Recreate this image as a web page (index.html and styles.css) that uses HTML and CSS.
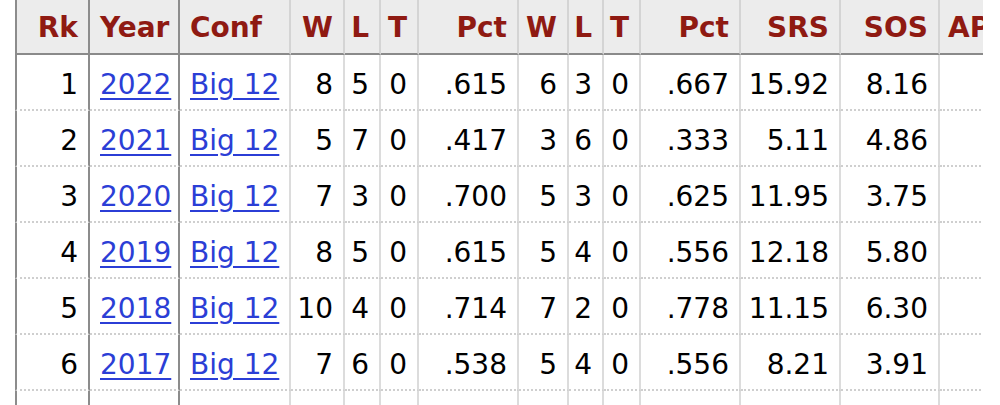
FILE: index.html
```html
<!DOCTYPE html>
<html>
<head>
<meta charset="utf-8">
<link rel="stylesheet" href="styles.css">
</head>
<body>
<div class="wrap">
<table class="stats">
<colgroup>
<col class="c-rk"><col class="c-year"><col class="c-conf"><col class="c-w1"><col class="c-l1"><col class="c-t1"><col class="c-pct"><col class="c-w2"><col class="c-l2"><col class="c-t2"><col class="c-pct"><col class="c-srs"><col class="c-sos"><col class="c-ap">
</colgroup>
<thead>
<tr>
<th class="strong first">Rk</th><th class="strong left">Year</th><th class="left">Conf</th><th>W</th><th>L</th><th>T</th><th>Pct</th><th>W</th><th>L</th><th>T</th><th>Pct</th><th>SRS</th><th>SOS</th><th class="left ap">AP Pre</th>
</tr>
</thead>
<tbody>
<tr><td class="strong first">1</td><td class="strong left"><a href="#">2022</a></td><td class="left"><a href="#">Big 12</a></td><td>8</td><td>5</td><td>0</td><td>.615</td><td>6</td><td>3</td><td>0</td><td>.667</td><td>15.92</td><td>8.16</td><td></td></tr>
<tr><td class="strong first">2</td><td class="strong left"><a href="#">2021</a></td><td class="left"><a href="#">Big 12</a></td><td>5</td><td>7</td><td>0</td><td>.417</td><td>3</td><td>6</td><td>0</td><td>.333</td><td>5.11</td><td>4.86</td><td></td></tr>
<tr><td class="strong first">3</td><td class="strong left"><a href="#">2020</a></td><td class="left"><a href="#">Big 12</a></td><td>7</td><td>3</td><td>0</td><td>.700</td><td>5</td><td>3</td><td>0</td><td>.625</td><td>11.95</td><td>3.75</td><td></td></tr>
<tr><td class="strong first">4</td><td class="strong left"><a href="#">2019</a></td><td class="left"><a href="#">Big 12</a></td><td>8</td><td>5</td><td>0</td><td>.615</td><td>5</td><td>4</td><td>0</td><td>.556</td><td>12.18</td><td>5.80</td><td></td></tr>
<tr><td class="strong first">5</td><td class="strong left"><a href="#">2018</a></td><td class="left"><a href="#">Big 12</a></td><td>10</td><td>4</td><td>0</td><td>.714</td><td>7</td><td>2</td><td>0</td><td>.778</td><td>11.15</td><td>6.30</td><td></td></tr>
<tr><td class="strong first">6</td><td class="strong left"><a href="#">2017</a></td><td class="left"><a href="#">Big 12</a></td><td>7</td><td>6</td><td>0</td><td>.538</td><td>5</td><td>4</td><td>0</td><td>.556</td><td>8.21</td><td>3.91</td><td></td></tr>
<tr><td class="strong first"></td><td class="strong left"></td><td class="left"></td><td></td><td></td><td></td><td></td><td></td><td></td><td></td><td></td><td></td><td></td><td></td></tr>
</tbody>
</table>
</div>
</body>
</html>
```
FILE: styles.css
```css
html, body {
  margin: 0;
  padding: 0;
  background: #fff;
}
.wrap {
  width: 968px;
  padding-left: 15px;
  height: 405px;
  overflow: hidden;
}
.stats {
  table-layout: fixed;
  width: 1005px;
  border-collapse: separate;
  border-spacing: 0;
  font-family: "DejaVu Sans", Verdana, sans-serif;
  font-size: 28px;
  color: #000;
}
.c-rk { width: 75px; }
.c-year { width: 90px; }
.c-conf { width: 111px; }
.c-w1 { width: 54px; }
.c-l1 { width: 36px; }
.c-t1 { width: 38px; }
.c-pct { width: 100px; }
.c-w2 { width: 50px; }
.c-l2 { width: 35px; }
.c-t2 { width: 37px; }
.c-srs { width: 100px; }
.c-sos { width: 99px; }
.c-ap { width: 80px; }

.stats th,
.stats td {
  padding: 0 10px 0 0;
  text-align: right;
  white-space: nowrap;
  overflow: hidden;
  border-right: 2px solid #dcdcdc;
}
.stats th {
  background: #ececec;
  color: #8f1a12;
  font-weight: bold;
  height: 50px;
  line-height: 50px;
  padding-top: 3px;
  border-bottom: 2px solid #8a8a8a;
  border-right-color: #d4d4d4;
}
.stats td {
  height: 48px;
  line-height: 48px;
  padding-top: 6px;
  border-bottom: 2px dotted #cfcfcf;
}
.stats .left {
  text-align: left;
  padding-right: 0;
  padding-left: 10px;
}
.stats .ap {
  padding-left: 8px;
}
.stats .strong {
  border-right-color: #8c8c8c;
}
.stats .first {
  border-left: 2px solid #8c8c8c;
}
.stats a {
  color: #2b3ed6;
  text-decoration: underline;
  text-underline-offset: 4px;
}
```
